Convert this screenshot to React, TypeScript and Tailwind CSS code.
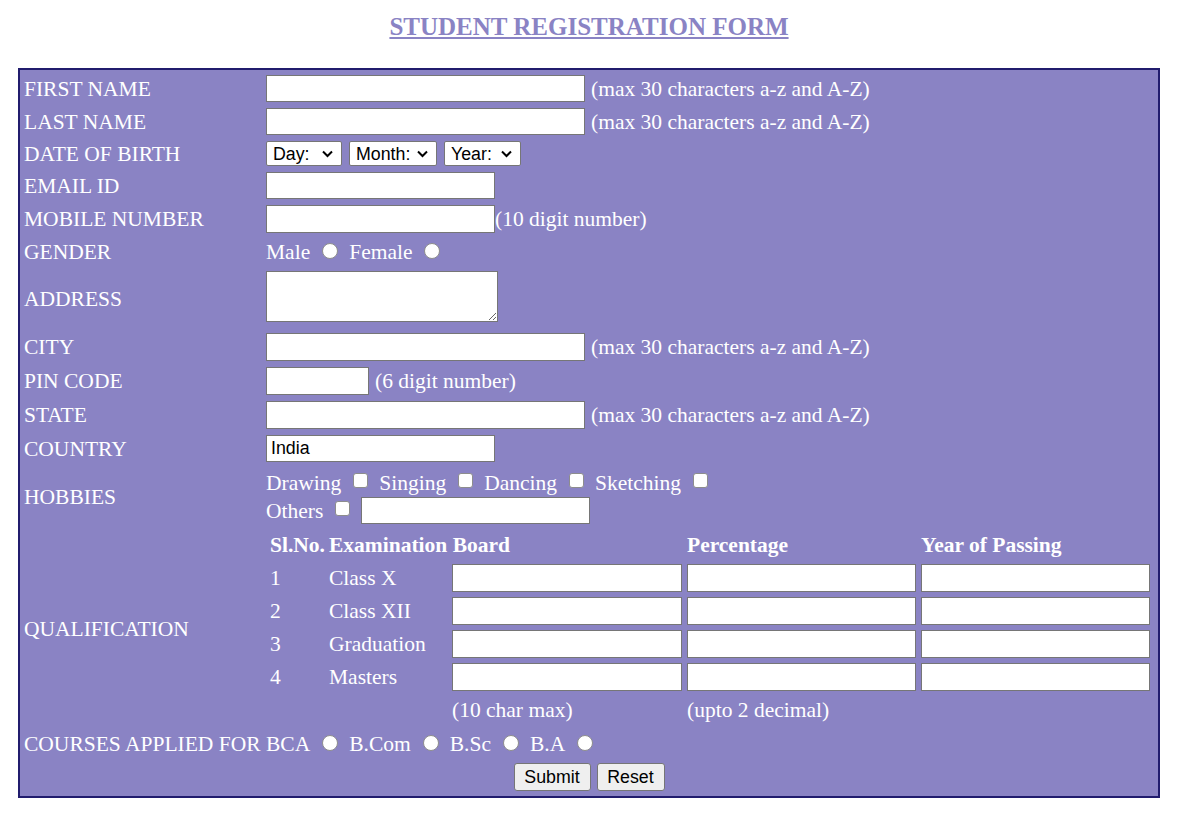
import type { ReactNode } from 'react';

const serif = "font-['Liberation_Serif','Times_New_Roman',serif]";
const sans = "font-['Liberation_Sans',Arial,sans-serif]";
const inputCls = `${sans} h-[27px] bg-white border border-[#767676] px-[4px] text-[17.78px] text-black outline-none`;

function Row({ label, h, children, top }: { label: string; h: string; children: ReactNode; top?: boolean }) {
  return (
    <div className={`flex ${h}`}>
      <div className="w-[242px] shrink-0 flex items-center whitespace-nowrap">{label}</div>
      <div className={`flex-1 flex ${top ? 'items-start' : 'items-center'}`}>{children}</div>
    </div>
  );
}

function Radio({ name }: { name: string }) {
  return (
    <input
      type="radio"
      name={name}
      className="appearance-none ml-[12px] mr-[11px] w-[16px] h-[16px] rounded-full bg-white border border-[#8d8d8d] shrink-0 -translate-y-[1px]"
    />
  );
}

function Check() {
  return (
    <input
      type="checkbox"
      className="appearance-none ml-[12px] mr-[11px] w-[15px] h-[15px] rounded-[3px] bg-white border border-[#8d8d8d] shrink-0 -translate-y-[2px]"
    />
  );
}

function FakeSelect({ text, w }: { text: string; w: string }) {
  return (
    <div className={`${sans} ${w} h-[25px] bg-white border border-[#767676] rounded-[2px] flex items-center justify-between pl-[6px] pr-[8px] text-[17.78px] text-black`}>
      <span>{text}</span>
      <svg width="11" height="8" viewBox="0 0 11 8" fill="none" stroke="#000" strokeWidth="2">
        <polyline points="1,1.5 5.5,6 10,1.5" />
      </svg>
    </div>
  );
}

const note = '(max 30 characters a-z and A-Z)';

export default function App() {
  const quals = ['Class X', 'Class XII', 'Graduation', 'Masters'];

  return (
    <div className={`min-h-screen bg-white ${serif} text-[21.5px]`}>
      <h3 className="ml-[18px] w-[1142px] pt-[12px] leading-[29px] text-center font-bold text-[25px] underline text-[#8a83c4]">
        STUDENT REGISTRATION FORM
      </h3>

      <form className="mt-[27px] ml-[18px] w-[1142px] border-2 border-[#211c6d] bg-[#8a83c4] text-white pl-[4px] pt-[5px] pb-[5px] flex flex-col gap-[6px] leading-[26px]">
        <Row label="FIRST NAME" h="h-[27px]">
          <input className={`${inputCls} w-[319px]`} />
          <span className="ml-[6px]">{note}</span>
        </Row>
        <Row label="LAST NAME" h="h-[27px]">
          <input className={`${inputCls} w-[319px]`} />
          <span className="ml-[6px]">{note}</span>
        </Row>
        <Row label="DATE OF BIRTH" h="h-[25px]">
          <div className="flex gap-[7px]">
            <FakeSelect text="Day:" w="w-[76px]" />
            <FakeSelect text="Month:" w="w-[88px]" />
            <FakeSelect text="Year:" w="w-[77px]" />
          </div>
        </Row>
        <Row label="EMAIL ID" h="h-[27px]">
          <input className={`${inputCls} w-[229px]`} />
        </Row>
        <Row label="MOBILE NUMBER" h="h-[28px]">
          <input className={`${inputCls} w-[229px] h-[28px]`} />
          <span>(10 digit number)</span>
        </Row>
        <Row label="GENDER" h="h-[26px]">
          <span>Male</span>
          <Radio name="gender" />
          <span>Female</span>
          <Radio name="gender" />
        </Row>
        <Row label="ADDRESS" h="h-[56px]" top>
          <textarea className={`${sans} w-[232px] h-[51px] bg-white border border-[#767676] text-black text-[17.78px] outline-none`} />
        </Row>
        <Row label="CITY" h="h-[28px]">
          <input className={`${inputCls} w-[319px] h-[28px]`} />
          <span className="ml-[6px]">{note}</span>
        </Row>
        <Row label="PIN CODE" h="h-[28px]">
          <input className={`${inputCls} w-[103px] h-[28px]`} />
          <span className="ml-[6px]">(6 digit number)</span>
        </Row>
        <Row label="STATE" h="h-[28px]">
          <input className={`${inputCls} w-[319px] h-[28px]`} />
          <span className="ml-[6px]">{note}</span>
        </Row>
        <Row label="COUNTRY" h="h-[27px]">
          <input className={`${inputCls} w-[229px]`} defaultValue="India" />
        </Row>
        <Row label="HOBBIES" h="h-[58px]">
          <div className="flex flex-col gap-[1px]">
            <div className="flex items-center h-[26px]">
              <span>Drawing</span>
              <Check />
              <span>Singing</span>
              <Check />
              <span>Dancing</span>
              <Check />
              <span>Sketching</span>
              <Check />
            </div>
            <div className="flex items-center h-[28px]">
              <span>Others</span>
              <Check />
              <input className={`${inputCls} w-[229px]`} />
            </div>
          </div>
        </Row>
        <Row label="QUALIFICATION" h="h-[193px]">
          <div className="grid grid-cols-[58px_118px_230px_229px_229px] gap-x-[5px] gap-y-[5px] auto-rows-[28px] items-center -translate-y-[1px]">
            <div className="pl-[4px] font-bold h-[26px]">Sl.No.</div>
            <div className="font-bold whitespace-nowrap h-[26px]">Examination Board</div>
            <div />
            <div className="font-bold h-[26px]">Percentage</div>
            <div className="font-bold h-[26px]">Year of Passing</div>
            {quals.map((q, i) => (
              <div key={q} className="contents">
                <div className="pl-[4px]">{i + 1}</div>
                <div>{q}</div>
                <input className={`${inputCls} w-full h-[28px]`} />
                <input className={`${inputCls} w-full h-[28px]`} />
                <input className={`${inputCls} w-full h-[28px]`} />
              </div>
            ))}
            <div />
            <div />
            <div>(10 char max)</div>
            <div>(upto 2 decimal)</div>
            <div />
          </div>
        </Row>
        <Row label="COURSES APPLIED FOR" h="h-[26px]">
          <span>BCA</span>
          <Radio name="course" />
          <span>B.Com</span>
          <Radio name="course" />
          <span>B.Sc</span>
          <Radio name="course" />
          <span>B.A</span>
          <Radio name="course" />
        </Row>
        <div className="flex justify-center gap-[6px] h-[28px] pr-[4px]">
          <button type="button" className={`${sans} w-[77px] h-[28px] bg-[#efefef] border border-[#767676] rounded-[3px] text-black text-[17.78px]`}>
            Submit
          </button>
          <button type="reset" className={`${sans} w-[68px] h-[28px] bg-[#efefef] border border-[#767676] rounded-[3px] text-black text-[17.78px]`}>
            Reset
          </button>
        </div>
      </form>
    </div>
  );
}
